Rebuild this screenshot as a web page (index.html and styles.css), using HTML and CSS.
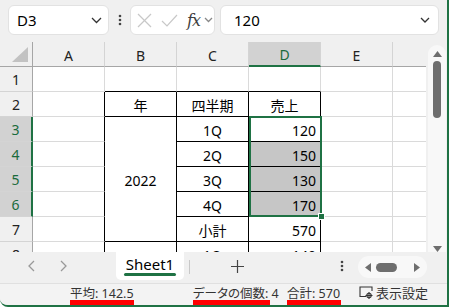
FILE: index.html
```html
<!DOCTYPE html>
<html lang="ja">
<head>
  <meta charset="UTF-8" />
  <title>Excel</title>
  <link rel="stylesheet" href="styles.css">
</head>
<body>
<div class="app">

  <!-- Formula bar -->
  <div class="toolbar">
    <div class="namebox">
      <span>D3</span>
      <svg class="chev" width="11" height="7" viewBox="0 0 11 7"><polyline points="1,1 5.5,5.5 10,1" /></svg>
    </div>
    <div class="kebab">
      <svg width="4" height="12" viewBox="0 0 4 12"><circle cx="2" cy="2" r="1.3"/><circle cx="2" cy="6" r="1.3"/><circle cx="2" cy="10" r="1.3"/></svg>
    </div>
    <div class="fxbox">
      <svg class="dim" width="15" height="15" viewBox="0 0 15 15"><line x1="1" y1="1" x2="14" y2="14"/><line x1="14" y1="1" x2="1" y2="14"/></svg>
      <svg class="dim" width="17" height="13" viewBox="0 0 17 13"><polyline points="1,7 6,12 16,1"/></svg>
      <span class="fx">fx</span>
      <svg class="chev light" width="9" height="6" viewBox="0 0 9 6"><polyline points="1,1 4.5,4.5 8,1" /></svg>
    </div>
    <div class="formula">
      <span>120</span>
      <svg class="chev" width="10" height="6" viewBox="0 0 10 6"><polyline points="1,1 5,5 9,1" /></svg>
    </div>
  </div>

  <!-- Grid -->
  <div class="main">
    <div class="sheet">
      <div class="grid">
        <div class="corner"><svg width="18" height="16" viewBox="0 0 18 16"><polygon points="17,0 17,15 1,15"/></svg></div>
        <div class="ch">A</div>
        <div class="ch">B</div>
        <div class="ch">C</div>
        <div class="ch on">D</div>
        <div class="ch">E</div>
        <div class="ch"></div>

        <div class="rh">1</div>
        <div class="c"></div>
        <div class="c bb"></div>
        <div class="c bb"></div>
        <div class="c bb"></div>
        <div class="c"></div>
        <div class="c"></div>

        <div class="rh">2</div>
        <div class="c br"></div>
        <div class="c t mid">年</div>
        <div class="c t mid">四半期</div>
        <div class="c t mid">売上</div>
        <div class="c"></div>
        <div class="c"></div>

        <div class="rh on">3</div>
        <div class="c br"></div>
        <div class="c t mid merged">2022</div>
        <div class="c t mid">1Q</div>
        <div class="c t num">120</div>
        <div class="c"></div>
        <div class="c"></div>

        <div class="rh on">4</div>
        <div class="c br"></div>
        <div class="c t mid">2Q</div>
        <div class="c t num grey">150</div>
        <div class="c"></div>
        <div class="c"></div>

        <div class="rh on">5</div>
        <div class="c br"></div>
        <div class="c t mid">3Q</div>
        <div class="c t num grey">130</div>
        <div class="c"></div>
        <div class="c"></div>

        <div class="rh on">6</div>
        <div class="c br"></div>
        <div class="c t mid">4Q</div>
        <div class="c t num grey">170</div>
        <div class="c"></div>
        <div class="c"></div>

        <div class="rh">7</div>
        <div class="c br"></div>
        <div class="c t mid">小計</div>
        <div class="c t num">570</div>
        <div class="c"></div>
        <div class="c"></div>

        <div class="rh">8</div>
        <div class="c br"></div>
        <div class="c t"></div>
        <div class="c t mid">1Q</div>
        <div class="c t num">140</div>
        <div class="c"></div>
        <div class="c"></div>
      </div>

      <!-- selected range D3:D6 -->
      <div class="selection"><div class="handle"></div></div>
    </div>

    <div class="vscroll">
      <div class="vtrack">
        <svg width="9" height="6" viewBox="0 0 9 6"><polygon points="4.5,0 9,6 0,6"/></svg>
        <div class="vthumb"></div>
        <div class="spacer"></div>
        <svg width="9" height="6" viewBox="0 0 9 6"><polygon points="0,0 9,0 4.5,6"/></svg>
      </div>
    </div>
  </div>

  <!-- Sheet tabs -->
  <div class="tabbar">
    <div class="nav">
      <svg width="8" height="12" viewBox="0 0 8 12"><polyline points="7,1 2,6 7,11"/></svg>
      <svg width="8" height="12" viewBox="0 0 8 12"><polyline points="1,1 6,6 1,11"/></svg>
    </div>
    <div class="tab">Sheet1</div>
    <div class="tab-sep"></div>
    <div class="add">
      <svg width="13" height="13" viewBox="0 0 13 13"><line x1="6.5" y1="0" x2="6.5" y2="13"/><line x1="0" y1="6.5" x2="13" y2="6.5"/></svg>
    </div>
    <div class="kebab dark">
      <svg width="4" height="12" viewBox="0 0 4 12"><circle cx="2" cy="2" r="1.3"/><circle cx="2" cy="6" r="1.3"/><circle cx="2" cy="10" r="1.3"/></svg>
    </div>
    <div class="hscroll">
      <svg width="6" height="9" viewBox="0 0 6 9"><polygon points="6,0 6,9 0,4.5"/></svg>
      <div class="hthumb"></div>
      <div class="spacer"></div>
      <svg width="6" height="9" viewBox="0 0 6 9"><polygon points="0,0 6,4.5 0,9"/></svg>
    </div>
  </div>

  <!-- Status bar -->
  <div class="status">
    <span class="stat marked avg">平均: 142.5</span>
    <span class="stat marked count">データの個数: 4</span>
    <span class="stat marked sum">合計: 570</span>
    <span class="stat view">
      <svg width="14" height="13" viewBox="0 0 14 13"><polyline points="7,10.5 1,10.5 1,1 13,1 13,5"/><circle cx="10" cy="9.5" r="2.2"/><line x1="10" y1="6" x2="10" y2="13"/><line x1="6.5" y1="9.5" x2="13.5" y2="9.5"/></svg>
      表示設定
    </span>
  </div>

</div>
</body>
</html>
```

FILE: styles.css
```css
* {
  box-sizing: border-box;
}

body {
  margin: 0;
  font-family: "Noto Sans", "Noto Sans CJK JP", sans-serif;
  background: white;
  color: black;
  overflow: hidden;
}

.app {
  width: 449px;
  height: 307px;
  display: flex;
  flex-direction: column;
  background: #f0f0f0;
  border-right: 2px solid #1f7244;
  border-bottom: 2px solid #1f7244;
  border-bottom-left-radius: 8px;
  overflow: hidden;
}

/* formula bar */
.toolbar {
  height: 42px;
  flex-shrink: 0;
  display: flex;
  align-items: flex-start;
  padding: 5px 0 0 8px;
}

.namebox,
.fxbox,
.formula {
  height: 30px;
  background: white;
  border: 1px solid #e2e2e2;
  border-radius: 6px;
  display: flex;
  align-items: center;
}

.namebox {
  width: 101px;
  padding: 0 6px 0 8px;
  font-size: 15px;
  justify-content: space-between;
}

.chev polyline {
  fill: none;
  stroke: #333;
  stroke-width: 1.3;
}

.chev.light polyline {
  stroke: #888;
}

.kebab {
  width: 21px;
  height: 30px;
  display: flex;
  align-items: center;
  justify-content: center;
}

.kebab circle {
  fill: #444;
}

.fxbox {
  width: 85px;
  padding: 0 0 0 6px;
  gap: 9px;
}

.dim line,
.dim polyline {
  fill: none;
  stroke: #c8c8c8;
  stroke-width: 1.2;
}

.fx {
  font-family: "DejaVu Serif", "Liberation Serif", serif;
  font-style: italic;
  font-size: 16px;
  color: #404040;
  letter-spacing: -1px;
}

.fxbox .chev {
  margin-left: -5px;
}

.formula {
  width: 219px;
  margin-left: 5px;
  padding: 0 8px 0 13px;
  font-size: 15px;
  justify-content: space-between;
}

/* grid area */
.main {
  height: 210px;
  flex-shrink: 0;
  display: flex;
}

.sheet {
  width: 426px;
  position: relative;
  overflow: hidden;
  background: white;
}

.grid {
  display: grid;
  grid-template-columns: 33px repeat(5, 72px) 66px;
  grid-auto-rows: 25px;
  font-size: 14px;
}

.corner,
.ch,
.rh {
  background: #f0f0f0;
  color: #222;
  display: flex;
  align-items: center;
  justify-content: center;
  font-size: 14px;
}

.corner {
  border-right: 1px solid #a6a6a6;
  border-bottom: 1px solid #a6a6a6;
  align-items: flex-end;
  justify-content: flex-end;
  padding: 0 3px 3px 0;
}

.corner polygon {
  fill: #c2c2c2;
}

.ch {
  border-right: 1px solid #d4d4d4;
  border-bottom: 1px solid #a6a6a6;
  padding-top: 2px;
}

.rh {
  border-right: 1px solid #a6a6a6;
  border-bottom: 1px solid #d4d4d4;
  padding-top: 1px;
}

.ch.on {
  background: #d2d2d2;
  color: #1a6b3c;
  border-bottom: 2px solid #1f7244;
}

.rh.on {
  background: #d2d2d2;
  color: #1a6b3c;
  border-right: 2px solid #1f7244;
}

.c {
  border-right: 1px solid #dadada;
  border-bottom: 1px solid #dadada;
  display: flex;
  align-items: center;
  padding: 2px 4px 0;
  white-space: nowrap;
}

.c.bb {
  border-bottom-color: black;
}

.c.br {
  border-right-color: black;
}

.c.t {
  border-right-color: black;
  border-bottom-color: black;
}

.mid {
  justify-content: center;
}

.num {
  justify-content: flex-end;
}

.merged {
  grid-row: span 5;
}

.grey {
  background: #c6c6c6;
}

.selection {
  position: absolute;
  left: 249px;
  top: 74px;
  width: 73px;
  height: 101px;
  border: 2px solid #1f7244;
}

.handle {
  position: absolute;
  right: -5px;
  bottom: -5px;
  width: 7px;
  height: 7px;
  background: #1f7244;
  border: 1px solid white;
}

/* vertical scroll */
.vscroll {
  width: 21px;
  padding: 3px 1px 0 2px;
}

.vtrack {
  height: 100%;
  background: #f8f8f8;
  border-radius: 9px 9px 0 0;
  display: flex;
  flex-direction: column;
  align-items: center;
  padding-top: 6px;
  gap: 4px;
}

.vtrack svg polygon,
.hscroll svg polygon {
  fill: #6e6e6e;
}

.vthumb {
  width: 8px;
  height: 57px;
  border-radius: 4px;
  background: #6e6e6e;
}

.spacer {
  flex: 1;
}

/* sheet tabs */
.tabbar {
  height: 31px;
  flex-shrink: 0;
  display: flex;
  align-items: flex-start;
  background: #f0f0f0;
}

.nav {
  width: 116px;
  height: 28px;
  display: flex;
  align-items: center;
  padding-left: 27px;
  gap: 25px;
}

.nav polyline {
  fill: none;
  stroke: #999;
  stroke-width: 1.3;
}

.tab {
  width: 68px;
  height: 28px;
  background: white;
  border-radius: 0 0 5px 5px;
  font-size: 15px;
  display: flex;
  justify-content: center;
  padding-top: 2px;
  position: relative;
}

.tab::after {
  content: "";
  position: absolute;
  left: 8px;
  right: 8px;
  bottom: 4px;
  height: 3px;
  border-radius: 2px;
  background: #1f7244;
}

.tab-sep {
  width: 1px;
  height: 14px;
  margin: 8px 0 0 5px;
  background: #c8c8c8;
}

.add {
  width: 94px;
  height: 28px;
  display: flex;
  align-items: center;
  justify-content: center;
}

.add line {
  stroke: #444;
  stroke-width: 1.2;
}

.kebab.dark {
  width: 28px;
  height: 28px;
  margin-left: 44px;
}

.hscroll {
  width: 69px;
  height: 22px;
  margin: 4px 0 0 2px;
  background: #f8f8f8;
  border-radius: 11px;
  display: flex;
  align-items: center;
  padding: 0 7px;
  gap: 5px;
}

.hthumb {
  width: 21px;
  height: 9px;
  border-radius: 5px;
  background: #6e6e6e;
}

/* status bar */
.status {
  height: 22px;
  flex-shrink: 0;
  border-top: 1px solid #e0e0e0;
  background: #f3f3f3;
  display: flex;
  align-items: stretch;
  font-size: 12.5px;
  font-feature-settings: "palt";
  color: #333;
}

.stat {
  display: flex;
  align-items: center;
  padding-bottom: 4px;
  white-space: nowrap;
  position: relative;
}

.marked::after {
  content: "";
  position: absolute;
  left: 0;
  right: 0;
  bottom: 0;
  height: 5px;
  background: #ff0000;
}

.avg {
  margin-left: 70px;
  width: 64px;
}

.count {
  margin-left: 59px;
  width: 77px;
}

.sum {
  margin-left: 17px;
  width: 54px;
}

.view {
  margin-left: 18px;
  gap: 3px;
  font-size: 13px;
}

.view svg {
  fill: none;
  stroke: #333;
  stroke-width: 1.1;
}
```
